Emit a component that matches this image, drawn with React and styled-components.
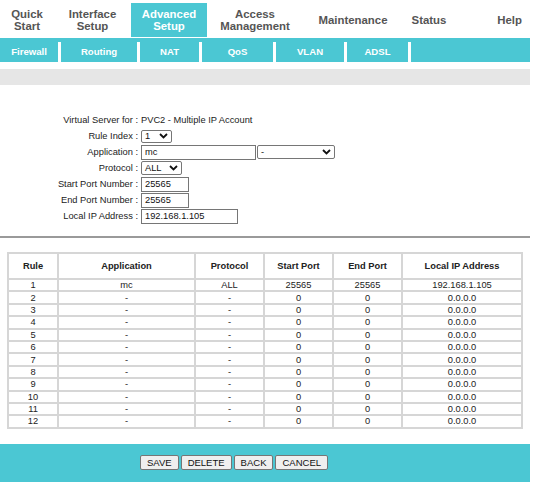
import { Fragment } from 'react';
import styled, { createGlobalStyle } from 'styled-components';

const TEAL = '#4bc7d3';
const FONT = '"Liberation Sans", Arial, sans-serif';

const GlobalStyle = createGlobalStyle`
  body {
    margin: 0;
    background: #fff;
    font-family: ${FONT};
    color: #222;
  }
`;

const Page = styled.div`
  width: 530px;
`;

const TopNav = styled.div`
  display: flex;
  height: 37px;
`;

const NavItem = styled.div`
  width: ${(p) => p.$w}px;
  margin-top: 3px;
  height: 34px;
  display: flex;
  align-items: center;
  justify-content: ${(p) => (p.$right ? 'flex-end' : 'center')};
  padding-right: ${(p) => (p.$right ? '8px' : '0')};
  box-sizing: border-box;
  text-align: center;
  font-size: 11.4px;
  font-weight: bold;
  line-height: 12px;
  color: ${(p) => (p.$active ? '#fff' : '#555')};
  background: ${(p) => (p.$active ? TEAL : 'transparent')};
`;

const SubNav = styled.div`
  display: flex;
  height: 24px;
  margin-top: 1px;
  background: ${TEAL};
`;

const SubItem = styled.div`
  width: ${(p) => p.$w}px;
  display: flex;
  align-items: center;
  justify-content: center;
  padding-top: 2px;
  box-sizing: border-box;
  color: #fff;
  font-size: 9.6px;
  font-weight: bold;
`;

const Divider = styled.div`
  width: 3px;
  margin-top: 4px;
  background: #fff;
`;

const GrayBar = styled.div`
  height: 16px;
  margin-top: 7px;
  background: #e6e6e6;
`;

const Form = styled.div`
  display: grid;
  grid-template-columns: 138px auto;
  grid-auto-rows: 16px;
  column-gap: 3px;
  margin-top: 27px;
  font-size: 9.3px;
  color: #222;
`;

const Label = styled.div`
  display: flex;
  align-items: center;
  justify-content: flex-end;
  white-space: nowrap;
`;

const Value = styled.div`
  display: flex;
  align-items: center;
  gap: 1px;
`;

const TextBox = styled.input`
  width: ${(p) => p.$w}px;
  height: 15px;
  box-sizing: border-box;
  border: 1px solid #767676;
  padding: 0 3px;
  margin: 0;
  font-family: ${FONT};
  font-size: 9.3px;
  color: #111;
  background: #fff;
  outline: none;
`;

const SelectBox = styled.div`
  width: ${(p) => p.$w}px;
  height: ${(p) => p.$h || 13}px;
  box-sizing: border-box;
  border: 1px solid #767676;
  border-radius: 2px;
  padding: 0 3px;
  display: flex;
  align-items: center;
  justify-content: space-between;
  font-size: 9.3px;
  color: #111;
  background: #fff;
`;

const Rule = styled.div`
  height: 2px;
  margin-top: 12px;
  background: #9a9a9a;
`;

const Table = styled.table`
  margin: 14px 0 0 7px;
  width: 514px;
  table-layout: fixed;
  border-collapse: collapse;
  border: 2px solid #d2d2d2;
  font-size: 9.3px;
  color: #222;

  th,
  td {
    border: 2px solid #d6d6d6;
    padding: 0;
    text-align: center;
  }

  th {
    height: 24px;
    font-weight: bold;
    color: #222;
  }

  td {
    height: 10.4px;
    line-height: 10px;
  }
`;

const ButtonBar = styled.div`
  height: 38px;
  margin-top: 15px;
  background: ${TEAL};
  display: flex;
  align-items: center;
  gap: 2px;
  padding-left: 140px;
`;

const Button = styled.button`
  height: 15px;
  padding: 0 6px;
  margin: 0;
  border: 1px solid #767676;
  border-radius: 2px;
  background: #efefef;
  font-family: ${FONT};
  font-size: 9.5px;
  color: #111;
  line-height: 11px;
`;

const Chevron = () => (
  <svg width="9" height="6" viewBox="0 0 9 6">
    <path d="M1 1 L4.5 4.5 L8 1" fill="none" stroke="#111" strokeWidth="1.8" />
  </svg>
);

const topItems = [
  { label: ['Quick', 'Start'], w: 54 },
  { label: ['Interface', 'Setup'], w: 77 },
  { label: ['Advanced', 'Setup'], w: 76, active: true },
  { label: ['Access', 'Management'], w: 96 },
  { label: ['Maintenance'], w: 100 },
  { label: ['Status'], w: 52 },
  { label: ['Help'], w: 75, right: true },
];

const subItems = [
  { label: 'Firewall', w: 58 },
  { label: 'Routing', w: 76 },
  { label: 'NAT', w: 59 },
  { label: 'QoS', w: 71 },
  { label: 'VLAN', w: 68 },
  { label: 'ADSL', w: 61 },
];

const rows = Array.from({ length: 12 }, (_, i) =>
  i === 0
    ? ['1', 'mc', 'ALL', '25565', '25565', '192.168.1.105']
    : [String(i + 1), '-', '-', '0', '0', '0.0.0.0']
);

export default function App() {
  return (
    <Page>
      <GlobalStyle />
      <TopNav>
        {topItems.map((it) => (
          <NavItem key={it.label.join(' ')} $w={it.w} $active={it.active} $right={it.right}>
            <span>
              {it.label.map((l, i) => (
                <span key={l}>
                  {i > 0 && <br />}
                  {l}
                </span>
              ))}
            </span>
          </NavItem>
        ))}
      </TopNav>

      <SubNav>
        {subItems.map((it) => (
          <Fragment key={it.label}>
            <SubItem $w={it.w}>{it.label}</SubItem>
            <Divider />
          </Fragment>
        ))}
      </SubNav>

      <GrayBar />

      <Form>
        <Label>Virtual Server for :</Label>
        <Value>PVC2 - Multiple IP Account</Value>

        <Label>Rule Index :</Label>
        <Value>
          <SelectBox $w={31} $h={13}>
            <span>1</span>
            <Chevron />
          </SelectBox>
        </Value>

        <Label>Application :</Label>
        <Value>
          <TextBox $w={115} defaultValue="mc" />
          <SelectBox $w={78} $h={14}>
            <span>-</span>
            <Chevron />
          </SelectBox>
        </Value>

        <Label>Protocol :</Label>
        <Value>
          <SelectBox $w={41} $h={14}>
            <span>ALL</span>
            <Chevron />
          </SelectBox>
        </Value>

        <Label>Start Port Number :</Label>
        <Value>
          <TextBox $w={48} defaultValue="25565" />
        </Value>

        <Label>End Port Number :</Label>
        <Value>
          <TextBox $w={48} defaultValue="25565" />
        </Value>

        <Label>Local IP Address :</Label>
        <Value>
          <TextBox $w={97} defaultValue="192.168.1.105" />
        </Value>
      </Form>

      <Rule />

      <Table>
        <colgroup>
          <col style={{ width: 50 }} />
          <col style={{ width: 137 }} />
          <col style={{ width: 69 }} />
          <col style={{ width: 69 }} />
          <col style={{ width: 69 }} />
          <col style={{ width: 120 }} />
        </colgroup>
        <thead>
          <tr>
            <th>Rule</th>
            <th>Application</th>
            <th>Protocol</th>
            <th>Start Port</th>
            <th>End Port</th>
            <th>Local IP Address</th>
          </tr>
        </thead>
        <tbody>
          {rows.map((r) => (
            <tr key={r[0]}>
              {r.map((c, i) => (
                <td key={i}>{c}</td>
              ))}
            </tr>
          ))}
        </tbody>
      </Table>

      <ButtonBar>
        <Button>SAVE</Button>
        <Button>DELETE</Button>
        <Button>BACK</Button>
        <Button>CANCEL</Button>
      </ButtonBar>
    </Page>
  );
}
